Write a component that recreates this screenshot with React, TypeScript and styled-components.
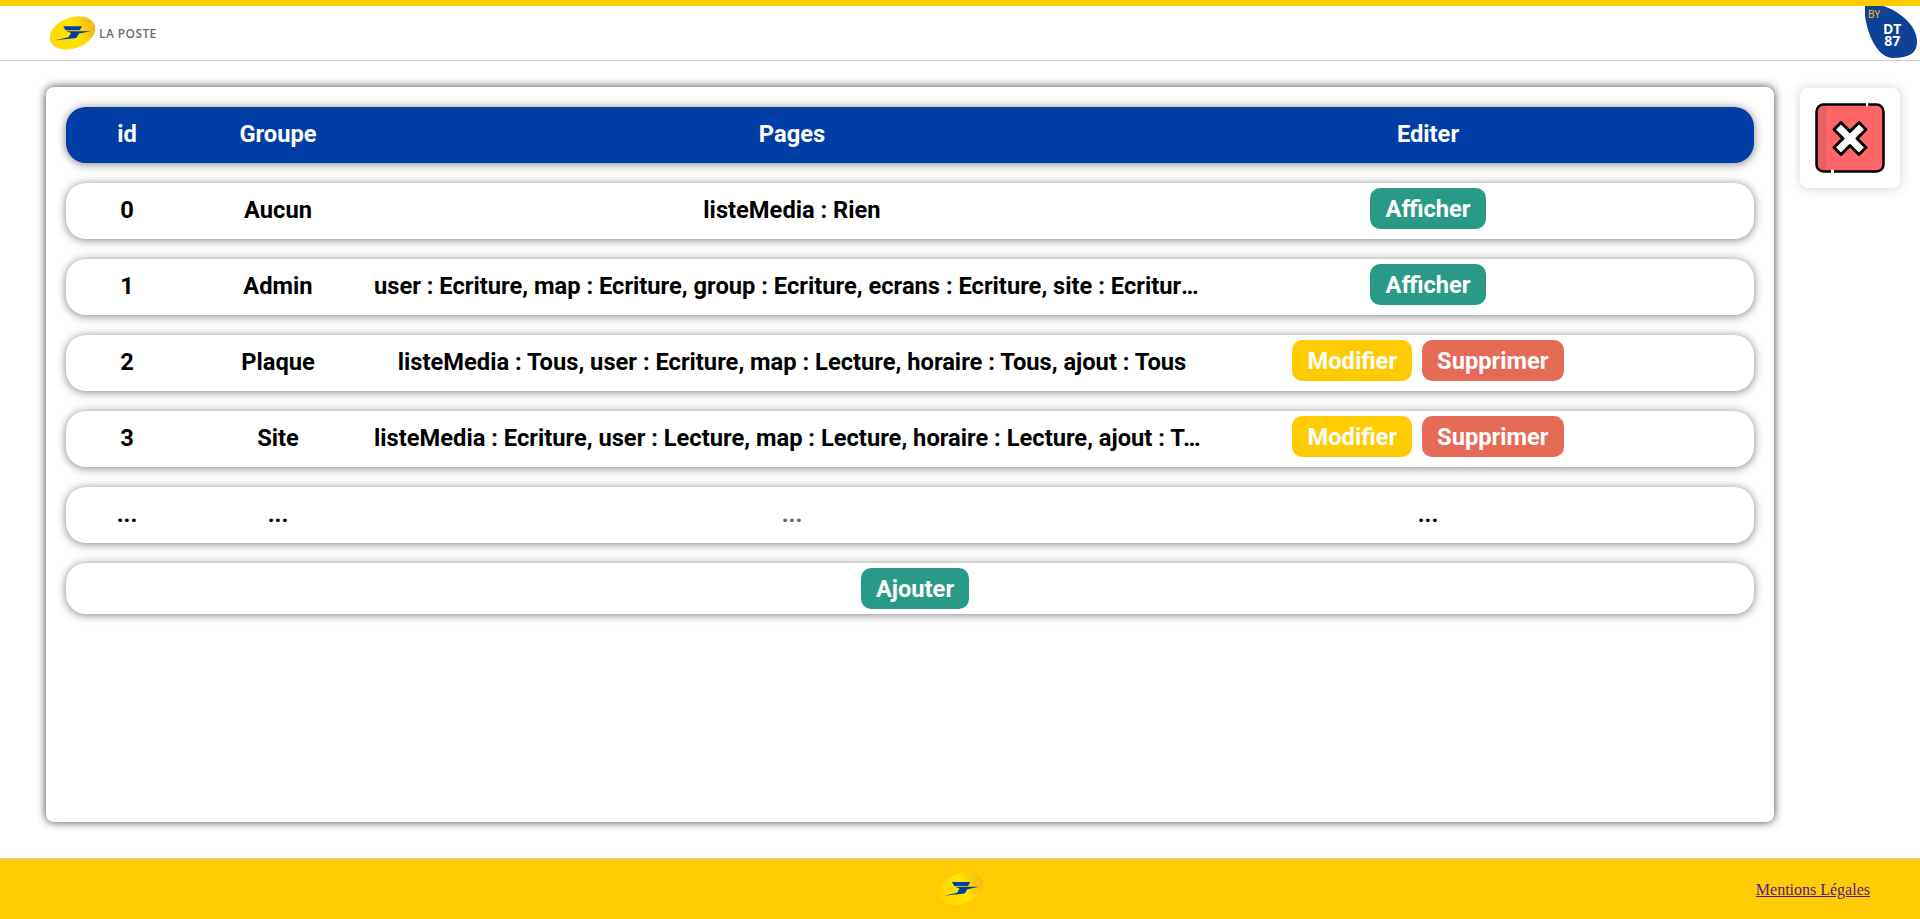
import styled, { createGlobalStyle } from 'styled-components'

const YELLOW = '#ffcc03'
const BLUE = '#003da5'
const TEAL = '#289a87'
const CORAL = '#e66b57'

const GlobalStyle = createGlobalStyle`
  html, body {
    margin: 0;
    padding: 0;
    background: #fff;
  }
`

const rows = [
  { id: '0', group: 'Aucun', pages: 'listeMedia : Rien', locked: true },
  { id: '1', group: 'Admin', pages: 'user : Ecriture, map : Ecriture, group : Ecriture, ecrans : Ecriture, site : Ecriture, horaire : Ecriture', locked: true },
  { id: '2', group: 'Plaque', pages: 'listeMedia : Tous, user : Ecriture, map : Lecture, horaire : Tous, ajout : Tous', locked: false },
  { id: '3', group: 'Site', pages: 'listeMedia : Ecriture, user : Lecture, map : Lecture, horaire : Lecture, ajout : Tous', locked: false },
]

function PosteMark({ width, id }: { width: number; id: string }) {
  return (
    <svg width={width} viewBox="0 0 45 34" aria-hidden="true">
      <defs>
        <linearGradient id={id} x1="0" y1="0.5" x2="1" y2="0.5">
          <stop offset="0" stopColor="#ffd500" />
          <stop offset="0.55" stopColor="#ffe600" />
          <stop offset="1" stopColor="#f7b512" />
        </linearGradient>
      </defs>
      <ellipse cx="22.5" cy="17" rx="23.5" ry="15.5" transform="rotate(-20 22.5 17)" fill={`url(#${id})`} />
      <path d="M13.3 10.3H32L29.6 14.3H15.5z" fill={BLUE} />
      <path d="M16.5 15.2H41L29 17.6 26.4 22 5 24.2 18.5 21.2 21 16.9z" fill={BLUE} />
    </svg>
  )
}

function BadgeShape() {
  return (
    <svg width="52" height="52" viewBox="0 0 52 52" aria-hidden="true">
      <path d="M0 0H18C32 4 52 18 52 36 52 47 44 52 28 52 14 52 3 32 0 10z" fill="#0f4296" />
    </svg>
  )
}

function CloseIcon() {
  return (
    <svg width="70" height="70" viewBox="0 0 70 70" aria-hidden="true">
      <rect x="1.5" y="1.5" width="67" height="67" rx="7" fill="#ff6468" />
      <path d="M8.5 1.5h2.5v67h-2.5a7 7 0 0 1-7-7v-53a7 7 0 0 1 7-7z" fill="#e85f66" />
      <rect x="1.5" y="1.5" width="67" height="67" rx="7" fill="none" stroke="#000" strokeWidth="2.5" />
      <path d="M51 0h2.2v3.2H51z" fill="#fff" />
      <path d="M16 66.8h3V70h-3z" fill="#fff" />
      <path
        d="M35 28.5 44 19.5 51 26.5 42 35.5 51 44.5 44 51.5 35 42.5 26 51.5 19 44.5 28 35.5 19 26.5 26 19.5z"
        fill="#fff"
        stroke="#000"
        strokeWidth="3"
        strokeLinejoin="round"
      />
    </svg>
  )
}

export default function App() {
  return (
    <Page>
      <GlobalStyle />
      <Header>
        <Brand>
          <PosteMark width={45} id="headerOval" />
          <BrandName>LA POSTE</BrandName>
        </Brand>
        <Badge>
          <BadgeShape />
          <BadgeBy>BY</BadgeBy>
          <BadgeName>DT<br />87</BadgeName>
        </Badge>
      </Header>

      <Main>
        <Panel>
          <HeadRow>
            <Cell>id</Cell>
            <Cell>Groupe</Cell>
            <Cell>Pages</Cell>
            <Cell>Editer</Cell>
          </HeadRow>

          {rows.map((row) => (
            <Row key={row.id}>
              <Cell>{row.id}</Cell>
              <Cell>{row.group}</Cell>
              <PagesCell>{row.pages}</PagesCell>
              <Actions>
                {row.locked ? (
                  <ActionButton $color={TEAL}>Afficher</ActionButton>
                ) : (
                  <>
                    <ActionButton $color={YELLOW}>Modifier</ActionButton>
                    <ActionButton $color={CORAL}>Supprimer</ActionButton>
                  </>
                )}
              </Actions>
            </Row>
          ))}

          <Row>
            <Cell>...</Cell>
            <Cell>...</Cell>
            <MutedCell>...</MutedCell>
            <Cell>...</Cell>
          </Row>

          <AddRow>
            <ActionButton $color={TEAL}>Ajouter</ActionButton>
          </AddRow>
        </Panel>

        <CloseCard>
          <CloseIcon />
        </CloseCard>
      </Main>

      <Footer>
        <FooterMark>
          <PosteMark width={44} id="footerOval" />
        </FooterMark>
        <FooterLink href="#mentions">Mentions Légales</FooterLink>
      </Footer>
    </Page>
  )
}

const Page = styled('div')`
  min-height: 919px;
  display: flex;
  flex-direction: column;
  box-sizing: border-box;
`

const Header = styled('header')`
  height: 54px;
  border-top: 6px solid ${YELLOW};
  border-bottom: 1px solid #ccc;
  display: flex;
  align-items: flex-start;
  justify-content: space-between;
  padding: 0 3px 0 50px;
`

const Brand = styled('div')`
  display: flex;
  align-items: center;
  gap: 4px;
  height: 44px;
  margin-top: 5px;
`

const BrandName = styled('span')`
  font-family: 'Open Sans', 'Liberation Sans', sans-serif;
  font-size: 12px;
  font-weight: 600;
  letter-spacing: 0.4px;
  color: #6b6b6b;
`

const Badge = styled('div')`
  position: relative;
  width: 52px;
  height: 52px;
  line-height: 0;
  color: #fff;
  font-family: 'Open Sans', 'Liberation Sans', sans-serif;
`

const BadgeBy = styled('span')`
  position: absolute;
  top: 3px;
  left: 3px;
  font-size: 10px;
  line-height: 10px;
  color: ${YELLOW};
`

const BadgeName = styled('span')`
  position: absolute;
  top: 17px;
  left: 18px;
  font-size: 14px;
  line-height: 12px;
  font-weight: 700;
  text-align: center;
`

const Main = styled('main')`
  flex: 1;
  display: flex;
  align-items: flex-start;
  padding: 26px 20px 0 46px;
  gap: 26px;
`

const Panel = styled('section')`
  width: 1728px;
  height: 735px;
  box-sizing: border-box;
  padding: 20px;
  display: flex;
  flex-direction: column;
  gap: 20px;
  background: #fff;
  border-radius: 8px;
  box-shadow: 0 0 10px rgba(0, 0, 0, 0.75);
`

const Row = styled('div')`
  height: 56px;
  box-sizing: border-box;
  padding-bottom: 2px;
  flex: none;
  display: grid;
  grid-template-columns: 122px 180px 848px 424px;
  align-items: center;
  background: #fff;
  border-radius: 20px;
  box-shadow: 0 1px 10px rgba(0, 0, 0, 0.5);
  font-family: 'Roboto', 'Liberation Sans', sans-serif;
  font-size: 23.7px;
  font-weight: 700;
  color: #000;
`

const HeadRow = styled(Row)`
  background: ${BLUE};
  color: #fff;
`

const AddRow = styled(Row)`
  height: 51px;
  padding-bottom: 0;
  display: flex;
  justify-content: center;
  padding-left: 10px;
`

const Cell = styled('div')`
  text-align: center;
  white-space: nowrap;
`

const PagesCell = styled(Cell)`
  overflow: hidden;
  text-overflow: ellipsis;
  padding: 0 6px;
`

const MutedCell = styled(Cell)`
  color: #666;
`

const Actions = styled('div')`
  display: flex;
  justify-content: center;
  gap: 10px;
  margin-bottom: 3px;
`

const ActionButton = styled('button')<{ $color: string }>`
  height: 41px;
  padding: 0 15px;
  border: none;
  border-radius: 10px;
  background: ${({ $color }) => $color};
  color: #fff;
  font-family: 'Roboto', 'Liberation Sans', sans-serif;
  font-size: 23.7px;
  font-weight: 700;
  cursor: pointer;
`

const CloseCard = styled('aside')`
  width: 100px;
  height: 100px;
  margin-top: 1px;
  display: flex;
  align-items: center;
  justify-content: center;
  background: #fff;
  border-radius: 8px;
  box-shadow: 0 0 12px rgba(0, 0, 0, 0.18);
`

const Footer = styled('footer')`
  position: relative;
  height: 61px;
  box-sizing: border-box;
  padding: 2px 50px 0 0;
  display: flex;
  align-items: center;
  justify-content: flex-end;
  background: ${YELLOW};
  border-top: 1px solid #ccc;
`

const FooterMark = styled('div')`
  position: absolute;
  top: 13px;
  left: 939px;
  line-height: 0;
`

const FooterLink = styled('a')`
  font-family: 'Liberation Serif', serif;
  font-size: 16px;
  color: #551a8b;
`
